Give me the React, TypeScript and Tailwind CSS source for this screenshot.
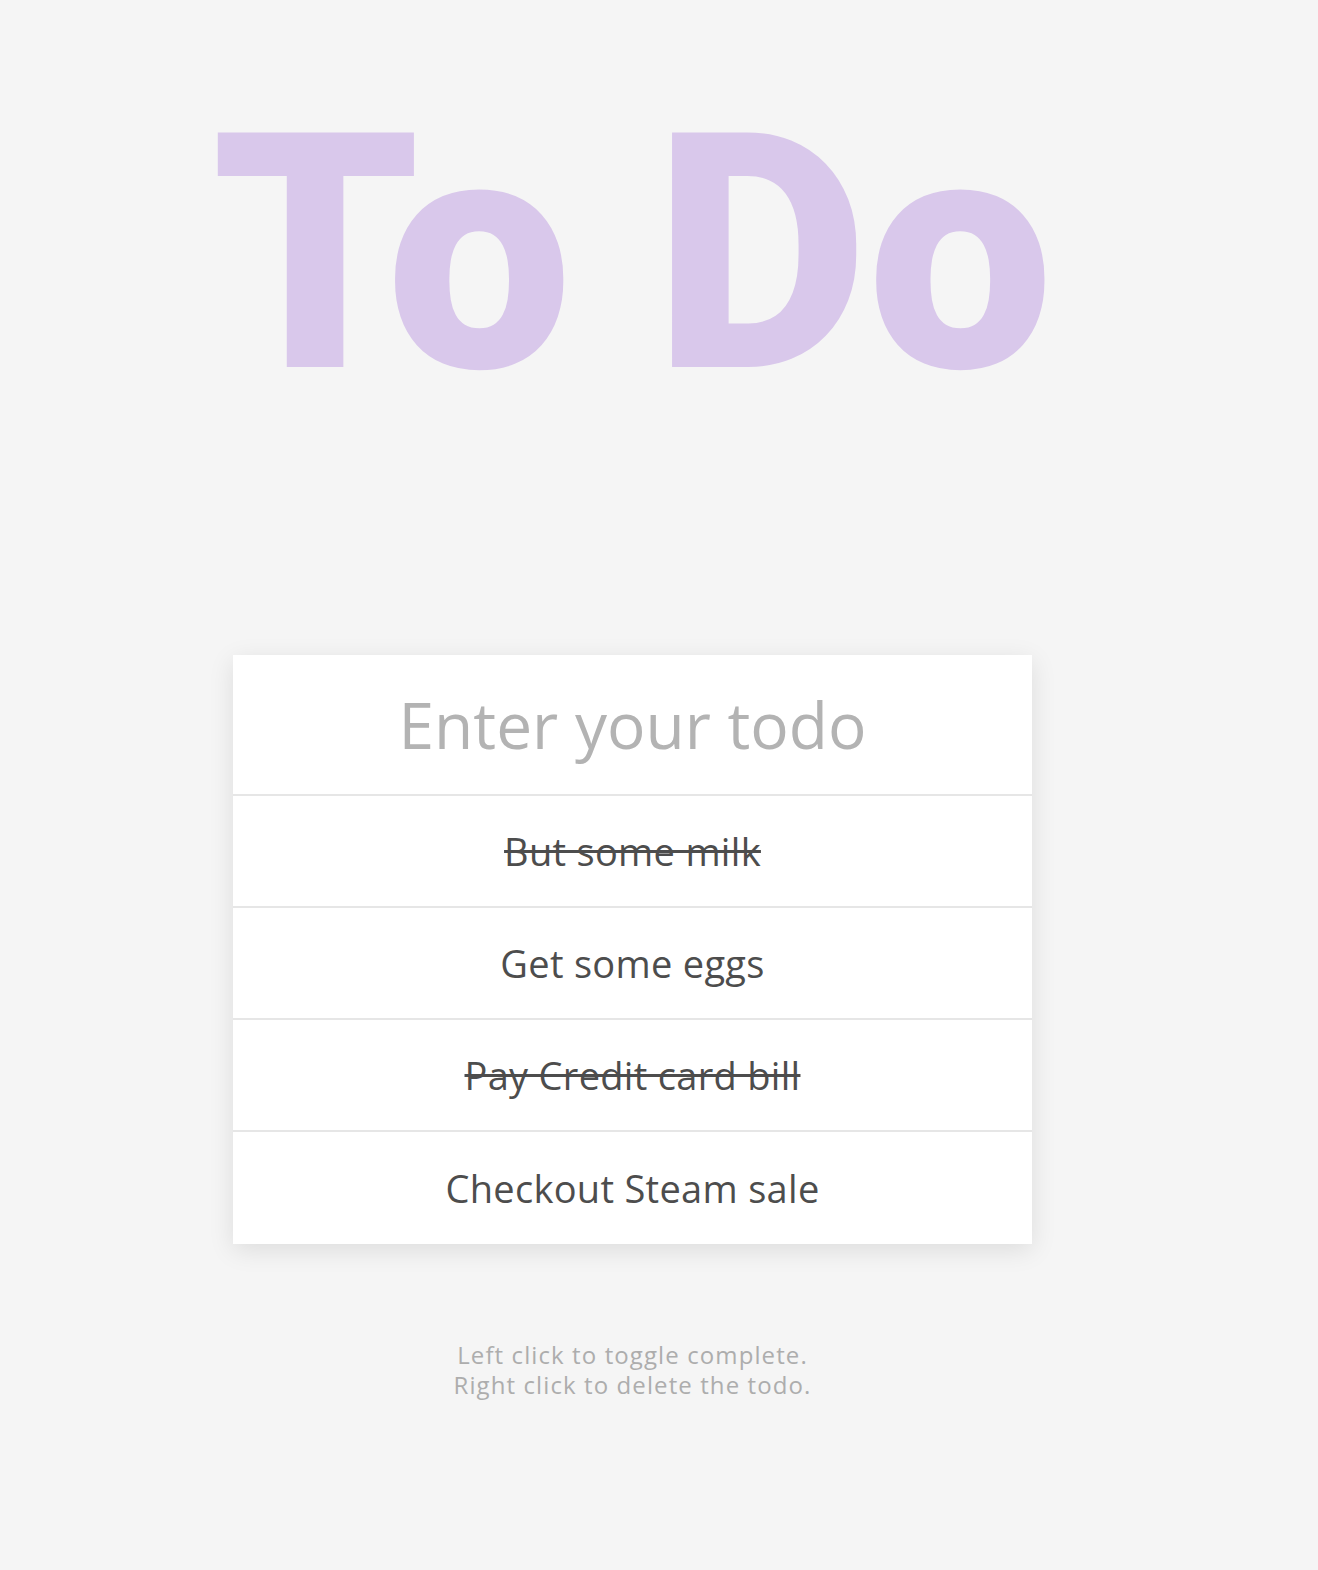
const todos = [
  { text: "But some milk", done: true },
  { text: "Get some eggs", done: false },
  { text: "Pay Credit card bill", done: true },
  { text: "Checkout Steam sale", done: false },
];

export default function App() {
  return (
    <div className="min-h-[1570px] bg-[#f5f5f5] font-['Open_Sans',sans-serif]">
      <div className="flex w-[1265px] flex-col items-center">
        <h1 className="mt-[75px] h-[360px] font-['Roboto',sans-serif] text-[330px] font-black leading-[360px] text-[#d9c8eb]">
          To Do
        </h1>
        <div className="mt-[220px] w-[799px] bg-white shadow-[0_6px_24px_rgba(0,0,0,0.1)]">
          <input
            className="h-[141px] w-full border-b-2 border-[#e6e6e6] bg-white text-center text-[64px] text-[#4d4d4d] outline-none placeholder:text-[#b3b3b3]"
            placeholder="Enter your todo"
          />
          <ul>
            {todos.map((t, i) => (
              <li
                key={t.text}
                className={
                  "flex h-[112px] items-center justify-center text-[38px] font-medium tracking-[0.3px] text-[#4d4d4d] " +
                  (t.done ? "line-through " : "") +
                  (i < todos.length - 1 ? "border-b-2 border-[#e6e6e6]" : "")
                }
              >
                {t.text}
              </li>
            ))}
          </ul>
        </div>
        <div className="mt-[96px] text-center text-[24px] font-medium leading-[30px] tracking-[1.1px] text-[#adadad]">
          <p>Left click to toggle complete.</p>
          <p>Right click to delete the todo.</p>
        </div>
      </div>
    </div>
  );
}
